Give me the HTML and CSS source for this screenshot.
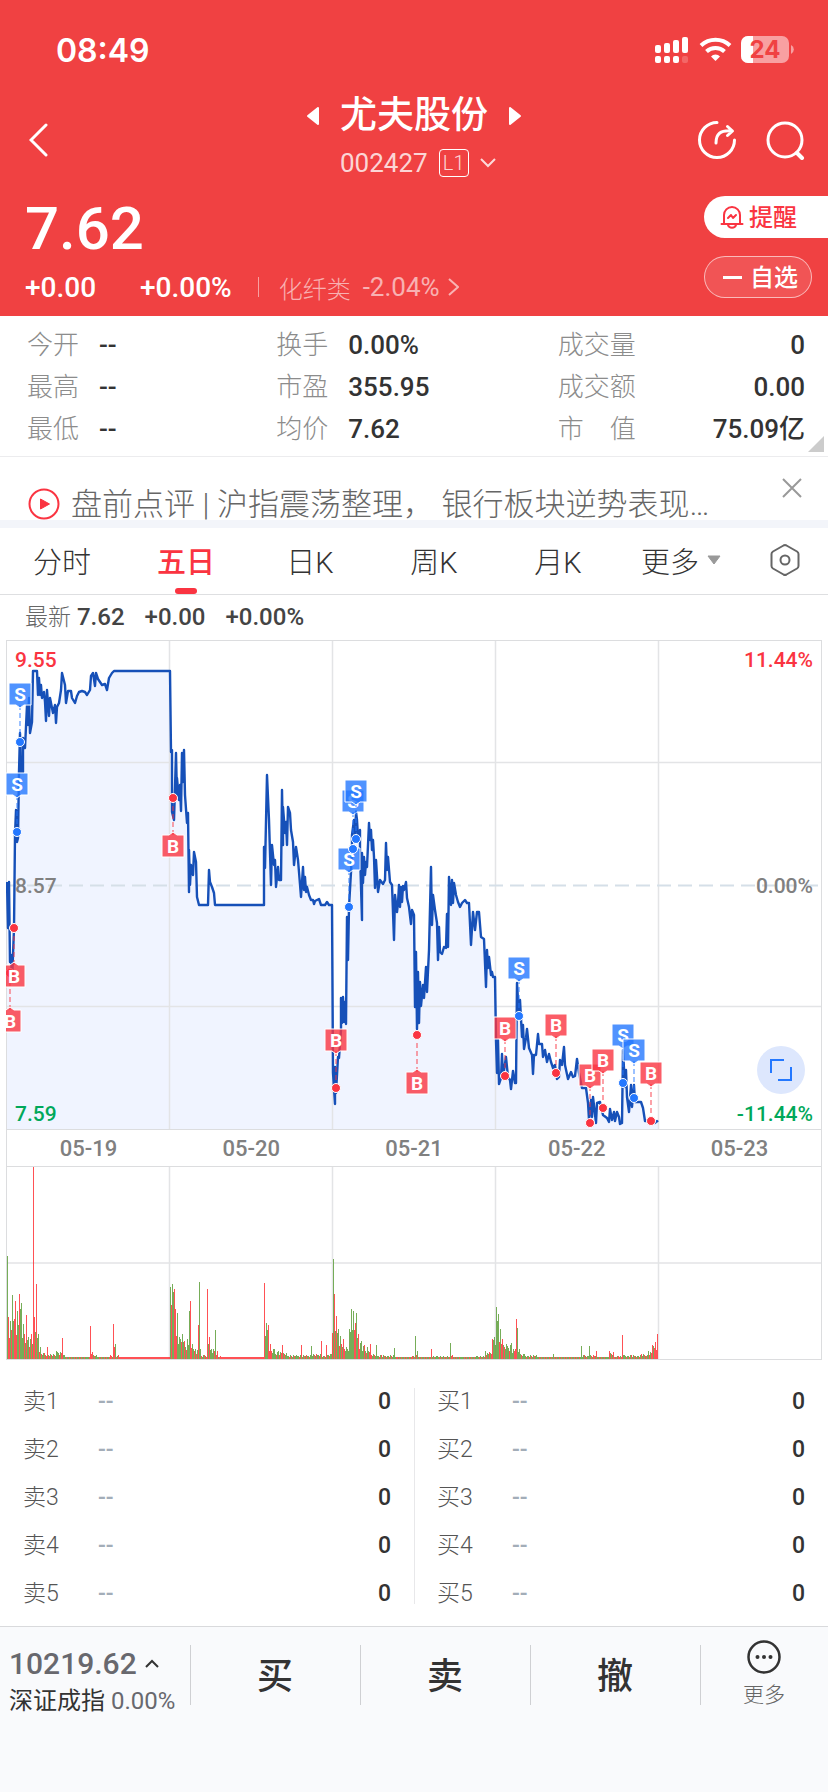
FILE: index.html
```html
<!DOCTYPE html>
<html lang="zh-CN">
  <head>
    <meta charset="UTF-8" />
    <meta name="viewport" content="width=device-width, initial-scale=1.0" />
    <title>尤夫股份 002427</title>
    <link rel="stylesheet" href="styles.css" />
  </head>
  <body>
    <header class="header">
      <div class="status">
        <span class="time">08:49</span>
        <svg class="status-icons" width="140" height="28" viewBox="0 0 140 28">
          <g fill="#fff">
            <rect x="0" y="9" width="6" height="8" rx="2" />
            <rect x="9" y="7" width="6" height="10" rx="2" />
            <rect x="18" y="4" width="6" height="13" rx="2" />
            <rect x="27" y="1" width="6" height="16" rx="2" />
            <rect x="0" y="20" width="6" height="7" rx="2" />
            <rect x="9" y="20" width="6" height="7" rx="2" />
            <rect x="18" y="20" width="6" height="7" rx="2" />
            <rect x="27" y="20" width="6" height="7" rx="2" opacity="0.2" />
            <path d="M56 20.500a6 6 0 0 1 9 0L60.500 25z" />
          </g>
          <g fill="none" stroke="#fff" stroke-width="4">
            <path d="M46 9.500a21 21 0 0 1 29 0" />
            <path d="M51.500 15.500a13 13 0 0 1 18 0" />
          </g>
          <rect x="86" y="0" width="48" height="27" rx="7" fill="#fff" opacity="0.5" />
          <path d="M93 0h5v27h-5a7 7 0 0 1-7-7V7a7 7 0 0 1 7-7z" fill="#fff" />
          <path d="M136 9a5 5 0 0 1 0 9z" fill="#fff" opacity="0.5" />
          <text x="110" y="22" class="battery-text">24</text>
        </svg>
      </div>

      <div class="nav">
        <button class="icon-btn back" aria-label="返回">
          <svg width="20" height="34" viewBox="0 0 20 34"><path d="M17 2L2 17l15 15" fill="none" stroke="#fff" stroke-width="3" stroke-linecap="round" /></svg>
        </button>
        <div class="stock">
          <div class="stock-name">
            <button class="icon-btn" aria-label="上一只"><svg width="12" height="18" viewBox="0 0 12 18"><path d="M11 1v16L1 9z" fill="#fff" stroke="#fff" stroke-width="2" stroke-linejoin="round" /></svg></button>
            <h1>尤夫股份</h1>
            <button class="icon-btn" aria-label="下一只"><svg width="12" height="18" viewBox="0 0 12 18"><path d="M1 1v16l10-8z" fill="#fff" stroke="#fff" stroke-width="2" stroke-linejoin="round" /></svg></button>
          </div>
          <div class="stock-code">
            <span>002427</span>
            <span class="level">L1</span>
            <svg width="16" height="10" viewBox="0 0 16 10"><path d="M1 1l7 7 7-7" fill="none" stroke="#fff" stroke-width="2" opacity="0.8" /></svg>
          </div>
        </div>
        <div class="nav-right">
          <button class="icon-btn" aria-label="分享">
            <svg width="40" height="40" viewBox="0 0 40 40" fill="none" stroke="#fff" stroke-width="3" stroke-linecap="round" stroke-linejoin="round">
              <path d="M20 2.500A17.500 17.500 0 1 0 37.500 20" />
              <path d="M19 23c0-9 4-13 16-12M30.500 6.500l5 4.500-5 4.500" />
            </svg>
          </button>
          <button class="icon-btn" aria-label="搜索">
            <svg width="40" height="40" viewBox="0 0 40 40" fill="none" stroke="#fff" stroke-width="3" stroke-linecap="round">
              <circle cx="20" cy="20" r="17" />
              <path d="M32 33l5 5" stroke-width="4" />
            </svg>
          </button>
        </div>
      </div>

      <div class="quote">
        <div class="quote-main">
          <div class="price">7.62</div>
          <div class="change">
            <span class="change-value">+0.00</span>
            <span>+0.00%</span>
            <a class="sector" href="#">化纤类 <span class="sector-rate">-2.04%</span>
              <svg width="11" height="18" viewBox="0 0 11 18"><path d="M1 1l9 8-9 8" fill="none" stroke="currentColor" stroke-width="2" /></svg>
            </a>
          </div>
        </div>
        <div class="quote-actions">
          <button class="pill alert">
            <svg width="24" height="24" viewBox="0 0 24 24" fill="none" stroke="#fa3441" stroke-width="2" stroke-linecap="round" stroke-linejoin="round">
              <path d="M1.500 19h21M4 19V10a8 8 0 0 1 16 0v9M8 20c1 3.500 7 3.500 8 0" />
              <path d="M8 13l3-3 2 3 3-3" />
            </svg>
            <span>提醒</span>
          </button>
          <button class="pill watch"><svg width="19" height="3" viewBox="0 0 19 3"><path d="M0 1.500h19" stroke="#fff" stroke-width="3" /></svg><span>自选</span></button>
        </div>
      </div>
    </header>

    <main>
      <section class="stats">
        <dl>
          <div><dt>今开</dt><dd>--</dd></div>
          <div><dt>最高</dt><dd>--</dd></div>
          <div><dt>最低</dt><dd>--</dd></div>
        </dl>
        <dl>
          <div><dt>换手</dt><dd>0.00%</dd></div>
          <div><dt>市盈</dt><dd>355.95</dd></div>
          <div><dt>均价</dt><dd>7.62</dd></div>
        </dl>
        <dl class="stats-right">
          <div><dt>成交量</dt><dd>0</dd></div>
          <div><dt>成交额</dt><dd>0.00</dd></div>
          <div><dt>市　值</dt><dd>75.09亿</dd></div>
        </dl>
        <span class="corner"></span>
      </section>

      <section class="news">
        <svg width="32" height="32" viewBox="0 0 32 32"><circle cx="16" cy="16" r="14.500" fill="none" stroke="#fa3441" stroke-width="2" /><path d="M12.500 11v10l9-5z" fill="#fa3441" stroke="#fa3441" stroke-linejoin="round" /></svg>
        <a class="news-text" href="#">盘前点评 | 沪指震荡整理， 银行板块逆势表现…</a>
        <button class="icon-btn news-close" aria-label="关闭"><svg width="20" height="20" viewBox="0 0 20 20"><path d="M1 1l18 18M19 1L1 19" stroke="#999" stroke-width="2" /></svg></button>
      </section>

      <nav class="tabs">
        <button>分时</button>
        <button class="active">五日</button>
        <button>日K</button>
        <button>周K</button>
        <button>月K</button>
        <button>更多 <svg width="14" height="10" viewBox="0 0 14 10"><path d="M1 1h12L7 9z" fill="#999" stroke="#999" stroke-linejoin="round" /></svg></button>
        <button aria-label="设置">
          <svg width="30" height="32" viewBox="0 0 30 32" fill="none" stroke="#666" stroke-width="2" stroke-linejoin="round">
            <path d="M13.500 1.500q1.500-.8 3 0l10.500 6q1.500 1 1.500 2.500v12q0 1.500-1.500 2.500l-10.500 6q-1.500.8-3 0l-10.500-6Q1.500 23.500 1.500 22V10Q1.500 8.500 3 7.500z" />
            <circle cx="15" cy="16" r="4.500" />
          </svg>
        </button>
      </nav>

      <div class="latest">
        <span><span class="latest-label">最新</span> 7.62</span>
        <span>+0.00</span>
        <span>+0.00%</span>
      </div>

      <section class="chart">
        <div class="price-chart">
          <svg viewBox="0 0 816 490">
            <polygon id="area" fill="#f0f4ff" />
            <g fill="none" stroke="#e3e4e6" stroke-width="1.500">
              <path d="M0 122.500h816M0 366.500h816M163.500 0v490M326.500 0v490M489.500 0v490M652.500 0v490" />
              <path d="M0 245.500h816" stroke="#d5dfe8" stroke-width="2" stroke-dasharray="14 7" />
              <rect x="0.500" y="0.500" width="815" height="489" stroke="#dcdddf" stroke-width="1" />
            </g>
            <polyline id="line" fill="none" stroke="#1650b8" stroke-width="2.400" stroke-linejoin="round" />
            <g id="marks"></g>
          </svg>
          <span class="axis top-left up">9.55</span>
          <span class="axis top-right up">11.44%</span>
          <span class="axis mid-left">8.57</span>
          <span class="axis mid-right">0.00%</span>
          <span class="axis bottom-left down">7.59</span>
          <span class="axis bottom-right down">-11.44%</span>
          <button class="expand" aria-label="全屏">
            <svg width="24" height="24" viewBox="0 0 24 24"><path d="M2 15V2h13M22 9v13H9" fill="none" stroke="#2478ff" stroke-width="2" /></svg>
          </button>
        </div>
        <div class="dates">
          <span>05-19</span><span>05-20</span><span>05-21</span><span>05-22</span><span>05-23</span>
        </div>
        <svg class="volume" viewBox="0 0 816 194">
          <path d="M0 97h816M163.500 0v194M326.500 0v194M489.500 0v194M652.500 0v194" stroke="#e3e4e6" stroke-width="1.500" />
          <g id="bars" opacity="0.85"></g>
          <rect x="0.500" y="0.500" width="815" height="193" fill="none" stroke="#dcdddf" />
        </svg>
      </section>

      <section class="book">
        <table>
          <tr><th scope="row">卖1</th><td>--</td><td>0</td></tr>
          <tr><th scope="row">卖2</th><td>--</td><td>0</td></tr>
          <tr><th scope="row">卖3</th><td>--</td><td>0</td></tr>
          <tr><th scope="row">卖4</th><td>--</td><td>0</td></tr>
          <tr><th scope="row">卖5</th><td>--</td><td>0</td></tr>
        </table>
        <table>
          <tr><th scope="row">买1</th><td>--</td><td>0</td></tr>
          <tr><th scope="row">买2</th><td>--</td><td>0</td></tr>
          <tr><th scope="row">买3</th><td>--</td><td>0</td></tr>
          <tr><th scope="row">买4</th><td>--</td><td>0</td></tr>
          <tr><th scope="row">买5</th><td>--</td><td>0</td></tr>
        </table>
      </section>
    </main>

    <footer class="footer">
      <button class="index">
        <span class="index-value">10219.62 <svg width="14" height="9" viewBox="0 0 14 9"><path d="M1 8l6-6 6 6" fill="none" stroke="#333" stroke-width="2" /></svg></span>
        <span class="index-name">深证成指 <span class="index-rate">0.00%</span></span>
      </button>
      <button class="trade">买</button>
      <button class="trade">卖</button>
      <button class="trade">撤</button>
      <button class="more">
        <svg width="34" height="34" viewBox="0 0 34 34"><circle cx="17" cy="17" r="15.500" fill="none" stroke="#333" stroke-width="2.500" /><g fill="#333"><circle cx="10.500" cy="17" r="2" /><circle cx="17" cy="17" r="2" /><circle cx="23.500" cy="17" r="2" /></g></svg>
        更多
      </button>
    </footer>

    <script src="script.js"></script>
  </body>
</html>
```
FILE: styles.css
```css
* {
  box-sizing: border-box;
}
body {
  margin: 0;
  min-height: 100vh;
  display: flex;
  flex-direction: column;
  background: #fff;
  color: #333;
  font-family: Roboto, "Noto Sans CJK SC", sans-serif;
}
button {
  margin: 0;
  padding: 0;
  border: 0;
  background: none;
  color: inherit;
  font: inherit;
  cursor: pointer;
}
a {
  color: inherit;
  text-decoration: none;
}
svg {
  flex-shrink: 0;
}
.icon-btn {
  display: flex;
}

/* header */
.header {
  background: #f04142;
  color: #fff;
  height: 316px;
}
.status {
  display: flex;
  justify-content: space-between;
  align-items: center;
  height: 88px;
  padding: 12px 33px 0 56px;
}
.time {
  font-family: Inter, sans-serif;
  font-size: 32px;
  font-weight: 600;
}
.battery-text {
  font-family: Inter, sans-serif;
  font-size: 24px;
  font-weight: 700;
  fill: #f04142;
  text-anchor: middle;
}
.nav {
  display: grid;
  grid-template-columns: 1fr auto 1fr;
  align-items: center;
  height: 104px;
  padding: 0 23px;
}
.back {
  padding-left: 6px;
}
.stock {
  align-self: start;
}
.stock-name {
  display: flex;
  justify-content: center;
  align-items: center;
  gap: 21px;
  height: 56px;
}
.stock-name h1 {
  margin: 0;
  font-size: 37px;
  font-weight: 500;
  line-height: 56px;
}
.stock-code {
  display: flex;
  align-items: center;
  gap: 11px;
  height: 38px;
  padding-left: 33px;
  font-size: 26px;
  color: rgba(255, 255, 255, 0.8);
}
.level {
  width: 30px;
  border: 1px solid #fff;
  border-radius: 4px;
  font-size: 20px;
  font-weight: 300;
  line-height: 26px;
  text-align: center;
}
.nav-right {
  display: flex;
  justify-content: flex-end;
  gap: 28px;
}
.quote {
  display: flex;
  justify-content: space-between;
}
.quote-main {
  padding-left: 25px;
}
.price {
  height: 74px;
  font-size: 60px;
  font-weight: 500;
  line-height: 74px;
}
.change {
  display: flex;
  align-items: center;
  height: 42px;
  font-size: 28px;
  font-weight: 500;
}
.change-value {
  width: 115px;
}
.sector {
  display: flex;
  align-items: center;
  gap: 12px;
  height: 20px;
  margin-left: 26px;
  padding-left: 20px;
  border-left: 1px solid rgba(255, 255, 255, 0.5);
  color: rgba(255, 255, 255, 0.6);
  font-size: 24px;
  font-weight: 300;
}
.sector-rate {
  font-size: 26px;
  font-weight: 400;
}
.sector svg {
  margin-left: -4px;
}
.quote-actions {
  display: flex;
  flex-direction: column;
  gap: 18px;
  width: 124px;
  padding-top: 4px;
}
.pill {
  display: flex;
  align-items: center;
  height: 42px;
  font-size: 24px;
  font-weight: 500;
}
.pill span {
  padding-bottom: 4px;
}
.alert {
  gap: 5px;
  padding-left: 16px;
  border-radius: 21px 0 0 21px;
  background: #fff;
  color: #fa3441;
}
.watch {
  gap: 8px;
  width: 108px;
  padding-left: 18px;
  border: 1px solid rgba(255, 255, 255, 0.6);
  border-radius: 21px;
  background: rgba(255, 255, 255, 0.1);
}

/* key figures */
.stats {
  position: relative;
  display: grid;
  grid-template-columns: 249fr 281fr 247fr;
  padding: 8px 23px 6px 27px;
  border-bottom: 1px solid #ececee;
}
.stats dl {
  margin: 0;
}
.stats dl div {
  display: flex;
  height: 42px;
  line-height: 42px;
  font-size: 26px;
}
.stats dt {
  width: 72px;
  color: #8c8c8c;
  font-weight: 300;
}
.stats dd {
  margin: 0;
  font-weight: 500;
}
.stats .stats-right div {
  justify-content: space-between;
}
.stats .stats-right dt {
  width: auto;
}
.corner {
  position: absolute;
  right: 4px;
  bottom: 4px;
  border: 8px solid #ccc;
  border-top-color: transparent;
  border-left-color: transparent;
}

/* news strip */
.news {
  display: flex;
  align-items: flex-start;
  height: 71px;
  padding: 31px 26px 0 28px;
  border-bottom: 8px solid #f3f5fa;
  overflow: hidden;
}
.news-text {
  flex: 1;
  margin-left: 11px;
  color: #666;
  font-size: 31px;
  font-weight: 300;
  line-height: 34px;
  white-space: nowrap;
}
.news-close {
  margin-top: -10px;
}

/* period tabs */
.tabs {
  display: grid;
  grid-template-columns: repeat(5, 124fr) 122fr 86fr;
  height: 67px;
  border-bottom: 1px solid #dedfe1;
}
.tabs button {
  position: relative;
  display: flex;
  justify-content: center;
  align-items: center;
  gap: 8px;
  padding-bottom: 2px;
  font-size: 29px;
  font-weight: 300;
}
.tabs .active {
  color: #fa3441;
  font-weight: 500;
}
.tabs .active::after {
  content: "";
  position: absolute;
  bottom: 0;
  width: 22px;
  height: 6px;
  border-radius: 3px;
  background: #fa3441;
}
.latest {
  display: flex;
  align-items: center;
  gap: 20px;
  height: 45px;
  padding-left: 25px;
  color: #444;
  font-size: 24px;
  font-weight: 500;
  line-height: 45px;
}
.latest-label {
  color: #666;
  font-size: 23px;
  font-weight: 300;
}

/* charts */
.chart {
  padding: 0 6px;
}
.chart > svg,
.price-chart > svg {
  display: block;
  width: 100%;
}
.price-chart {
  position: relative;
}
.axis {
  position: absolute;
  color: #808080;
  font-size: 21px;
  font-weight: 500;
  line-height: 24px;
}
.up {
  color: #fa3441;
}
.down {
  color: #00a85a;
}
.top-left {
  top: 8px;
  left: 9px;
}
.top-right {
  top: 8px;
  right: 9px;
}
.mid-left {
  top: calc(50% - 11px);
  left: 9px;
}
.mid-right {
  top: calc(50% - 11px);
  right: 9px;
}
.bottom-left {
  bottom: 4px;
  left: 9px;
}
.bottom-right {
  bottom: 4px;
  right: 9px;
}
.expand {
  position: absolute;
  right: 17px;
  bottom: 36px;
  display: flex;
  justify-content: center;
  align-items: center;
  width: 48px;
  height: 48px;
  border-radius: 50%;
  background: #dde7fd;
}
.mark-text {
  font-size: 19px;
  font-weight: 700;
  fill: #fff;
  text-anchor: middle;
}
.dates {
  display: grid;
  grid-template-columns: repeat(5, 1fr);
  height: 36px;
  border: solid #dcdddf;
  border-width: 0 1px;
  color: #808080;
  font-size: 22px;
  font-weight: 500;
  line-height: 38px;
  text-align: center;
}

/* order book */
.book {
  display: grid;
  grid-template-columns: 1fr 1fr;
  padding: 18px 0 8px;
  background: linear-gradient(#e8e8ea, #e8e8ea) center 28px / 1px 216px no-repeat;
}
.book table {
  width: 100%;
  border-collapse: collapse;
}
.book tr {
  height: 48px;
}
.book th,
.book td {
  padding: 0;
  font-size: 23px;
  line-height: 48px;
  text-align: left;
}
.book th {
  width: 98px;
  padding-left: 23px;
  color: #555;
  font-weight: 300;
}
.book td {
  color: #a3adb8;
  font-weight: 500;
}
.book td:last-child {
  padding-right: 23px;
  color: #333;
  text-align: right;
}

/* bottom bar */
.footer {
  flex: 1;
  display: grid;
  grid-template-columns: 190fr 170fr 170fr 170fr 128fr;
  align-items: start;
  padding-top: 13px;
  border-top: 1px solid #d9dadc;
  background: #f9fafc;
}
.footer button {
  height: 78px;
  white-space: nowrap;
}
.footer .index {
  display: flex;
  flex-direction: column;
  align-items: flex-start;
  padding-left: 9px;
}
.index-value {
  display: flex;
  align-items: center;
  gap: 8px;
  height: 46px;
  color: #68686e;
  font-size: 30px;
  font-weight: 500;
}
.index-name {
  font-size: 24px;
  line-height: 30px;
}
.index-rate {
  color: #68686e;
}
.trade,
.more {
  background: linear-gradient(#cfd0d3, #cfd0d3) left 5px / 1px 60px no-repeat;
}
.footer .trade {
  padding-bottom: 12px;
  font-size: 36px;
  font-weight: 500;
}
.footer .more {
  display: flex;
  flex-direction: column;
  align-items: center;
  color: #666;
  font-size: 21px;
  font-weight: 300;
  line-height: 42px;
}
```
FILE: script.js
```js
// five day price line, x,y in chart units
const prices =
  "1,242 2,288 3,242 4,322 5,315 6,342 8,288 9,195 10,170 11,202 12,198 13,132 14,93 15,132 17,132 17,98 19,108 21,65 22,85 23,58 24,93 26,82 27,31 31,31 " +
  "32,55 33,38 34,55 35,45 36,58 38,52 39,62 40,81 41,50 43,76 44,58 47,73 49,65 50,83 51,67 53,63 55,50 56,33 58,41 59,45 60,63 62,51 65,51 66,58 69,63 71,56 73,52 76,51 79,52 81,55 84,50 85,36 87,33 89,46 90,33 92,39 96,45 99,44 101,50 103,38 106,33 108,31 164,31 " +
  "165,112 166,110 166,172 168,180 169,148 170,113 171,158 171,138 173,160 174,145 175,171 176,113 177,142 178,110 179,155 181,183 182,173 183,252 183,210 184,245 185,225 187,235 188,212 190,222 191,257 193,265 202,265 203,230 204,242 206,247 208,253 209,265 258,265 " +
  "258,207 259,228 261,135 263,180 265,245 266,205 268,225 269,220 270,247 272,227 273,240 275,240 276,150 277,205 277,167 279,193 280,182 281,205 282,167 284,173 285,190 287,202 288,225 290,207 292,220 293,232 295,257 297,227 298,250 299,237 300,252 301,247 303,255 305,260 307,260 308,264 309,261 313,259 315,265 319,265 321,262 323,265 326,265 " +
  "327,433 329,464 329,427 330,453 332,417 333,418 335,390 335,358 336,383 337,357 338,382 339,362 340,384 341,277 342,320 343,267 345,232 346,208 346,195 348,180 349,200 350,172 351,180 352,197 354,190 354,213 356,280 356,213 357,243 358,217 359,235 360,222 361,227 363,183 364,200 365,190 366,210 367,200 368,217 369,248 370,220 372,252 374,240 377,244 379,240 380,203 381,230 382,217 384,242 386,245 " +
  "388,300 389,255 391,272 392,263 393,245 394,267 395,247 396,262 397,246 398,250 400,242 401,258 403,267 405,284 406,270 408,275 409,367 410,312 411,389 412,332 413,383 414,342 415,366 417,345 418,358 420,327 421,352 423,310 425,227 426,285 427,255 429,270 431,283 432,320 433,287 434,312 436,314 438,307 440,308 441,274 442,307 443,237 445,265 446,240 447,263 448,243 450,255 452,262 454,267 456,263 459,260 461,263 463,263 " +
  "465,305 467,272 469,290 471,272 473,272 475,297 478,299 480,347 481,310 482,328 483,317 485,335 486,332 487,337 489,337 490,400 491,433 492,400 493,444 495,438 496,414 497,437 500,417 502,437 504,440 505,449 507,431 509,443 510,443 511,343 513,377 514,360 516,397 517,385 518,409 520,398 521,389 523,408 526,415 527,434 528,415 530,415 532,394 533,404 536,404 537,417 539,410 541,422 543,414 545,422 547,428 549,425 551,439 553,437 554,420 556,425 558,407 559,425 562,439 565,432 567,437 569,436 571,419 573,433 " +
  "576,448 580,448 582,463 583,480 585,460 586,477 587,457 590,483 591,463 594,462 597,475 601,478 603,482 604,469 606,480 608,472 609,481 611,472 613,477 614,484 616,483 617,410 619,447 620,430 621,457 623,472 625,445 626,467 628,445 629,462 635,462 637,468 639,481 645,481 649,483 651,481 652,482";

document.getElementById("line").setAttribute("points", prices);
document.getElementById("area").setAttribute("points", "1,489 " + prices + " 652,489");

// trades: type, x, y of the dot, side of the flag (-1 above, 1 below)
const trades = [
  ["B", 4, 333, 1],
  ["B", 8, 288, 1],
  ["S", 11, 192, -1],
  ["S", 14, 102, -1],
  ["B", 167, 158, 1],
  ["B", 330, 448, -1],
  ["S", 343, 267, -1],
  ["S", 347, 209, -1],
  ["S", 350, 199, -1],
  ["B", 411, 395, 1],
  ["B", 499, 436, -1],
  ["S", 513, 376, -1],
  ["B", 550, 433, -1],
  ["B", 584, 483, -1],
  ["B", 597, 468, -1],
  ["S", 617, 443, -1],
  ["S", 628, 458, -1],
  ["B", 645, 481, -1],
];

let marks = "";
trades.forEach(([type, x, y, side]) => {
  const color = type === "B" ? "#fa3441" : "#2478ff";
  const cy = y + side * 48;
  const edge = cy - side * 11;
  marks += `<path d="M${x} ${y}V${edge}" stroke="${color}" stroke-width="1.500" stroke-dasharray="5 3" opacity="0.6" />`;
  marks += `<path d="M${x - 11} ${cy + side * 11}V${edge}H${x - 4}L${x} ${edge - side * 3}L${x + 4} ${edge}H${x + 11}V${cy + side * 11}z" fill="${color}" fill-opacity="0.8" stroke="#fff" />`;
  marks += `<text class="mark-text" x="${x}" y="${cy + 7}">${type}</text>`;
  marks += `<circle cx="${x}" cy="${y}" r="4.500" fill="${color}" stroke="#fff" />`;
});
document.getElementById("marks").innerHTML = marks;

// volume peaks: x, height, direction
const peaks =
  "0,40,r 1,103,g 2,42,r 4,38,g 6,64,g 8,40,r 9,58,r 11,48,g 13,65,r 15,56,g 17,35,g 18,25,r 20,44,r 22,22,g 25,25,r 27,192,r 28,42,r 30,75,r 32,25,g 34,12,g 38,6,r 41,12,r 44,5,g 50,8,g 56,21,r 58,4,g 65,2,r 80,2,g 84,33,r 86,7,r 90,4,g 95,2,r 104,4,r 107,35,r 109,15,g 112,4,r 114,2,r " +
  "162,2,r 164,72,g 166,75,g 168,70,r 169,50,r 171,46,g 173,22,g 176,25,g 178,18,r 181,20,g 183,48,g 184,58,r 186,15,g 189,10,g 192,34,r 193,77,g 194,10,g 198,4,r 201,70,r 203,22,r 205,10,g 209,29,g 211,8,r 214,3,r 257,2,r 258,76,r 260,36,g 262,34,r 264,15,r 268,10,g 272,8,g 276,14,r 280,6,g 290,4,g 295,14,r 300,4,r 305,13,g 310,5,r 315,18,r 318,3,r 320,14,r 325,5,g " +
  "326,26,r 327,100,g 328,65,r 330,43,r 332,30,g 334,23,g 337,20,r 340,12,g 343,30,g 345,50,g 347,48,g 349,36,r 350,46,g 352,25,r 355,18,g 358,14,r 361,12,g 364,15,r 367,5,g 370,14,g 375,4,r 388,11,g 391,2,r 406,3,r 409,23,g 411,8,g 418,2,r 425,10,r 430,3,g 444,16,g 446,4,r 455,2,g 470,3,g 479,8,g 483,7,r 486,20,r 488,22,g " +
  "490,52,g 492,45,g 494,30,g 496,20,r 500,15,g 505,16,g 509,10,r 510,40,r 511,31,g 513,10,g 518,5,g 530,4,g 545,2,r 547,5,g 560,2,r 575,13,g 578,4,r 583,13,g 587,4,r 590,8,r 600,2,g 603,8,r 607,7,r 612,3,r 616,24,r 618,4,g 625,4,r 635,5,r 642,8,g 646,14,r 649,17,r 651,25,r";

const list = peaks.split(" ").map((p) => p.split(","));
let bars = "";
function bar(x, h, dir) {
  const color = dir === "r" ? "#ff3338" : "#5f9f3c";
  bars += `<rect x="${x}" y="${193 - h}" width="1" height="${h}" fill="${color}" />`;
}
list.forEach(([x, h, dir], i) => {
  bar(+x, +h, dir);
  const next = list[i + 1];
  if (!next) return;
  // minutes between two peaks stay under the lower one
  const low = Math.min(+h, +next[1]);
  for (let m = +x + 1; m < +next[0]; m++) {
    const ratio = low < 3 ? 1 : 0.5 + ((m * 37) % 10) / 20;
    const quiet = low < 3 && next[0] - x > 30;
    bar(m, Math.max(2, Math.round(low * ratio)), quiet || (m * 7) % 5 < 2 ? "r" : "g");
  }
});
document.getElementById("bars").innerHTML = bars;
```
